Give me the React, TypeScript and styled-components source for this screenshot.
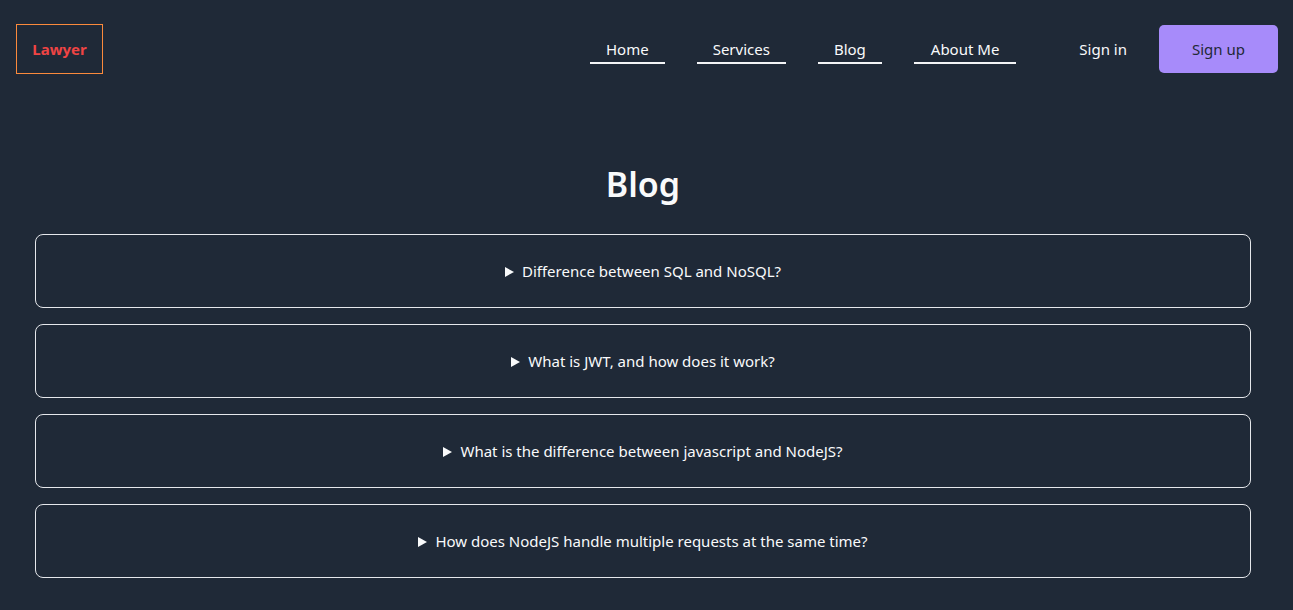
import React from "react";
import styled, { createGlobalStyle } from "styled-components";

const Global = createGlobalStyle`
  html, body { margin: 0; padding: 0; background: #1f2937; }
  body { font-family: "Noto Sans", "Open Sans", sans-serif; color: #f9fafb; }
  * { box-sizing: border-box; }
`;

const Page = styled.div`
  min-height: 610px;
  background: #1f2937;
`;

const NavBar = styled.header`
  display: flex;
  align-items: center;
  justify-content: space-between;
  padding: 24px 15px 0 16px;
  height: 73px;
`;

const Logo = styled.a`
  display: flex;
  align-items: center;
  justify-content: center;
  width: 87px;
  height: 50px;
  margin-top: 1px;
  border: 1px solid #fb8a3c;
  color: #ef4444;
  font-weight: 700;
  font-size: 15px;
  text-decoration: none;
`;

const Right = styled.div`
  display: flex;
  align-items: center;
`;

const Menu = styled.nav`
  display: flex;
  gap: 32px;
  margin-right: 63px;
  padding-top: 5px;
`;

const MenuLink = styled.a<{ $wide?: boolean }>`
  display: block;
  padding: 0 ${(p) => (p.$wide ? "17px" : "16px")} 2px;
  border-bottom: 2px solid #f3f4f6;
  color: #f9fafb;
  font-size: 15px;
  line-height: 22px;
  text-decoration: none;
`;

const SignIn = styled.a`
  color: #f9fafb;
  font-size: 15px;
  text-decoration: none;
  margin-right: 32px;
`;

const SignUp = styled.button`
  width: 119px;
  height: 48px;
  border: none;
  border-radius: 5px;
  background: #a78bfa;
  color: #1f2937;
  font-family: inherit;
  font-size: 15px;
`;

const Main = styled.main`
  padding: 0 42px 0 35px;
`;

const Title = styled.h1`
  margin: 86px 0 25px;
  text-align: center;
  font-size: 34px;
  font-weight: 600;
  line-height: 50px;
  color: #f9fafb;
`;

const List = styled.div`
  display: flex;
  flex-direction: column;
  gap: 16px;
`;

const Item = styled.details`
  border: 1px solid #e5e7eb;
  border-radius: 8px;
`;

const Summary = styled.summary`
  display: flex;
  align-items: center;
  justify-content: center;
  gap: 8px;
  height: 72px;
  list-style: none;
  cursor: pointer;
  font-size: 15px;
  color: #f9fafb;
  &::-webkit-details-marker { display: none; }
`;

const Marker = styled.svg`
  width: 9px;
  height: 10px;
  flex: none;
  margin-top: 1px;
`;

const questions = [
  "Difference between SQL and NoSQL?",
  "What is JWT, and how does it work?",
  "What is the difference between javascript and NodeJS?",
  "How does NodeJS handle multiple requests at the same time?",
];

export default function App() {
  return (
    <Page>
      <Global />
      <NavBar>
        <Logo href="#">Lawyer</Logo>
        <Right>
          <Menu>
            <MenuLink href="#">Home</MenuLink>
            <MenuLink href="#">Services</MenuLink>
            <MenuLink href="#">Blog</MenuLink>
            <MenuLink href="#" $wide>
              About Me
            </MenuLink>
          </Menu>
          <SignIn href="#">Sign in</SignIn>
          <SignUp>Sign up</SignUp>
        </Right>
      </NavBar>
      <Main>
        <Title>Blog</Title>
        <List>
          {questions.map((q) => (
            <Item key={q}>
              <Summary>
                <Marker viewBox="0 0 9 10">
                  <polygon points="0,0 9,5 0,10" fill="#f9fafb" />
                </Marker>
                {q}
              </Summary>
            </Item>
          ))}
        </List>
      </Main>
    </Page>
  );
}
